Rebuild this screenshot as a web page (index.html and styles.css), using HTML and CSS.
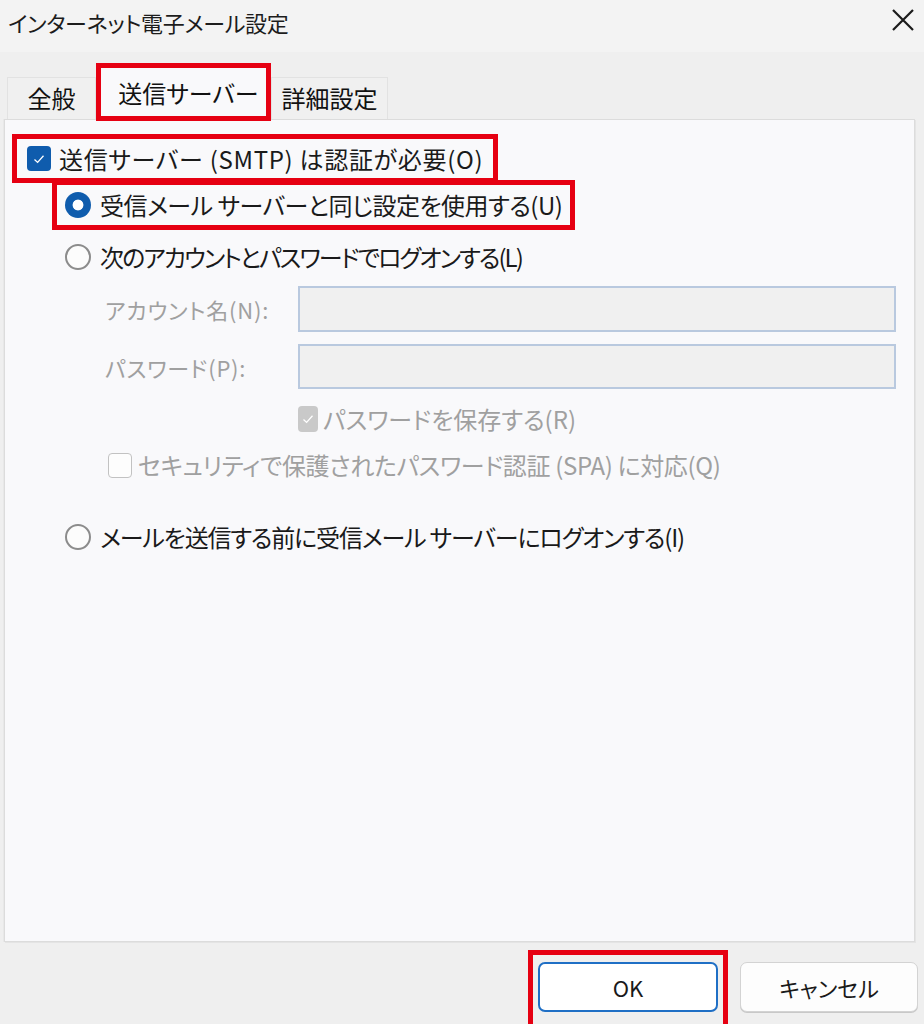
FILE: index.html
```html
<!DOCTYPE html>
<html lang="ja">
<head>
<meta charset="utf-8">
<title>インターネット電子メール設定</title>
<link rel="stylesheet" href="styles.css">
</head>
<body>
<div class="dialog">
  <div class="titlebar">
    <span class="title">インターネット電子メール設定</span>
    <svg class="close" width="22" height="22" viewBox="0 0 22 22"><path d="M1 1 L21 21 M21 1 L1 21" stroke="#1a1a1a" stroke-width="2.2" fill="none"/></svg>
  </div>
  <div class="tabs">
    <div class="tab tab-first">全般</div>
    <div class="tab tab-active mark">送信サーバー</div>
    <div class="tab tab-last">詳細設定</div>
  </div>
  <div class="panel">
    <div class="row row1 mark">
      <span class="check checked"><svg width="14" height="14" viewBox="0 0 14 14"><path d="M2.5 7.5 L5.6 10.4 L11.5 3.8" stroke="#fff" stroke-width="1.3" fill="none"/></svg></span>
      <span class="label">送信サーバー (SMTP) は認証が必要(O)</span>
    </div>
    <div class="row row2 mark">
      <span class="radio selected"></span>
      <span class="label">受信メール サーバーと同じ設定を使用する(U)</span>
    </div>
    <div class="row row3">
      <span class="radio"></span>
      <span class="label">次のアカウントとパスワードでログオンする(L)</span>
    </div>
    <div class="field field1">
      <span class="flabel">アカウント名(N):</span>
      <span class="input"></span>
    </div>
    <div class="field field2">
      <span class="flabel">パスワード(P):</span>
      <span class="input"></span>
    </div>
    <div class="row row6">
      <span class="check disabled-checked"><svg width="14" height="14" viewBox="0 0 14 14"><path d="M2.5 7.5 L5.6 10.4 L11.5 3.8" stroke="#fff" stroke-width="1.3" fill="none"/></svg></span>
      <span class="label dim">パスワードを保存する(R)</span>
    </div>
    <div class="row row7">
      <span class="check empty"></span>
      <span class="label dim">セキュリティで保護されたパスワード認証 (SPA) に対応(Q)</span>
    </div>
    <div class="row row8">
      <span class="radio"></span>
      <span class="label">メールを送信する前に受信メール サーバーにログオンする(I)</span>
    </div>
  </div>
  <div class="footer">
    <div class="okmark">
      <button class="btn btn-ok">OK</button>
    </div>
    <button class="btn btn-cancel">キャンセル</button>
  </div>
</div>
</body>
</html>
```
FILE: styles.css
```css
* { box-sizing: border-box; }
html, body { margin: 0; padding: 0; }
body {
  width: 924px;
  height: 1024px;
  overflow: hidden;
  background: #efefef;
  font-family: "Noto Sans CJK JP", "Noto Sans", sans-serif;
  font-feature-settings: "palt";
  color: #1a1a1a;
}
.dialog { width: 924px; height: 1024px; display: flex; flex-direction: column; }

.titlebar {
  height: 52px;
  flex: none;
  background: #f3f3f3;
  display: flex;
  align-items: center;
  justify-content: space-between;
  padding: 0 10px 8px 8px;
}
.title { font-size: 22px; color: #1c1c1c; letter-spacing: -0.3px; }
.close { margin-top: -4px; }

.tabs {
  height: 67px;
  flex: none;
  display: flex;
  align-items: flex-end;
  padding-left: 7px;
}
.tab {
  font-size: 24px;
  height: 42px;
  display: flex;
  align-items: center;
  justify-content: center;
  background: #f0f0f0;
  border: 1px solid #e2e2e2;
  border-bottom: none;
  color: #111;
  padding-bottom: 2px;
}
.tab-first { width: 89px; }
.tab-last { width: 117px; }
.tab-active {
  width: 175px;
  height: 58px;
  background: #f9f9fb;
  border: 5px solid #e60012;
  margin-bottom: -2px;
  position: relative;
  z-index: 2;
  padding-top: 2px;
  padding-left: 10px;
}

.panel {
  flex: none;
  height: 823px;
  margin: 0 9px 0 4px;
  background: #f9f9fb;
  border: 1px solid #dcdcdc;
  box-shadow: 1px 1px 0 #e4e4e4, -1px 0 0 #e8e8e8;
  padding: 14px 0 0 7px;
  display: flex;
  flex-direction: column;
  align-items: flex-start;
}

.row {
  display: inline-flex;
  align-items: center;
  font-size: 24px;
  line-height: 1;
}
.mark { border: 5px solid #e60012; }
.label { white-space: nowrap; }
.dim { color: #a0a0a0; }

.row1 { height: 49px; padding: 0 10px 0 10px; }
.row1 .check { margin-right: 8px; }
.row1 .label { letter-spacing: 0.7px; }
.row2 { height: 50px; margin-top: -3px; margin-left: 40px; padding: 0 8px 0 8px; }
.row2 .label { letter-spacing: -0.5px; }
.row2 .radio, .row3 .radio, .row8 .radio { margin-right: 9px; }
.row3 { height: 40px; margin-top: 7px; margin-left: 53px; }
.row3 .label { letter-spacing: -1.9px; }

.check {
  width: 24px;
  height: 25px;
  border-radius: 4px;
  display: inline-flex;
  align-items: center;
  justify-content: center;
  flex: none;
}
.checked { background: #0f5cad; }
.disabled-checked { background: #c9c9c9; width: 20px; height: 26px; }
.empty { background: #fdfdfd; border: 1.5px solid #c2c2c2; }

.radio {
  width: 26px;
  height: 26px;
  border-radius: 50%;
  flex: none;
  border: 2px solid #8c8c8c;
  background: #fcfcfc;
}
.radio.selected {
  border: none;
  background: radial-gradient(circle, #ffffff 0 5px, #0f5cad 5.8px);
}

.field {
  display: flex;
  align-items: center;
  width: 100%;
}
.field1 { margin-top: 9px; height: 46px; }
.field2 { margin-top: 12px; height: 45px; }
.flabel {
  width: 193px;
  margin-left: 93px;
  font-size: 22px;
  color: #a0a0a0;
  white-space: nowrap;
  letter-spacing: 0.8px;
}
.input {
  display: block;
  width: 598px;
  height: 100%;
  background: #f0f0f0;
  border: 2px solid #b9c9df;
}

.row6 { height: 30px; margin-top: 15px; margin-left: 286px; }
.row6 .check { margin-right: 5px; }
.row7 { height: 30px; margin-top: 16px; margin-left: 96px; }
.row7 .check { margin-right: 6px; }
.row7 .label { letter-spacing: -0.35px; }
.row8 { height: 40px; margin-top: 37px; margin-left: 53px; }
.row8 .label { letter-spacing: -1.15px; }

.footer {
  flex: 1;
  display: flex;
  align-items: flex-start;
  justify-content: flex-end;
  padding: 8px 6px 0 0;
  gap: 12px;
}
.okmark {
  border: 5px solid #e60012;
  border-bottom: none;
  padding: 7px 5px 12px 5px;
  height: 82px;
}
.btn {
  font-family: "Noto Sans CJK JP", "Noto Sans", sans-serif;
  font-feature-settings: "palt";
  font-size: 22px;
  color: #1a1a1a;
  height: 50px;
  border-radius: 7px;
  background: #fdfdfd;
  display: flex;
  align-items: center;
  justify-content: center;
}
.btn-ok { width: 180px; border: 2px solid #1f6fc5; background: #ffffff; }
.btn-cancel { width: 178px; margin-top: 12px; border: 1px solid #d3d3d3; box-shadow: 0 1px 0 #c8c8c8; }
```
